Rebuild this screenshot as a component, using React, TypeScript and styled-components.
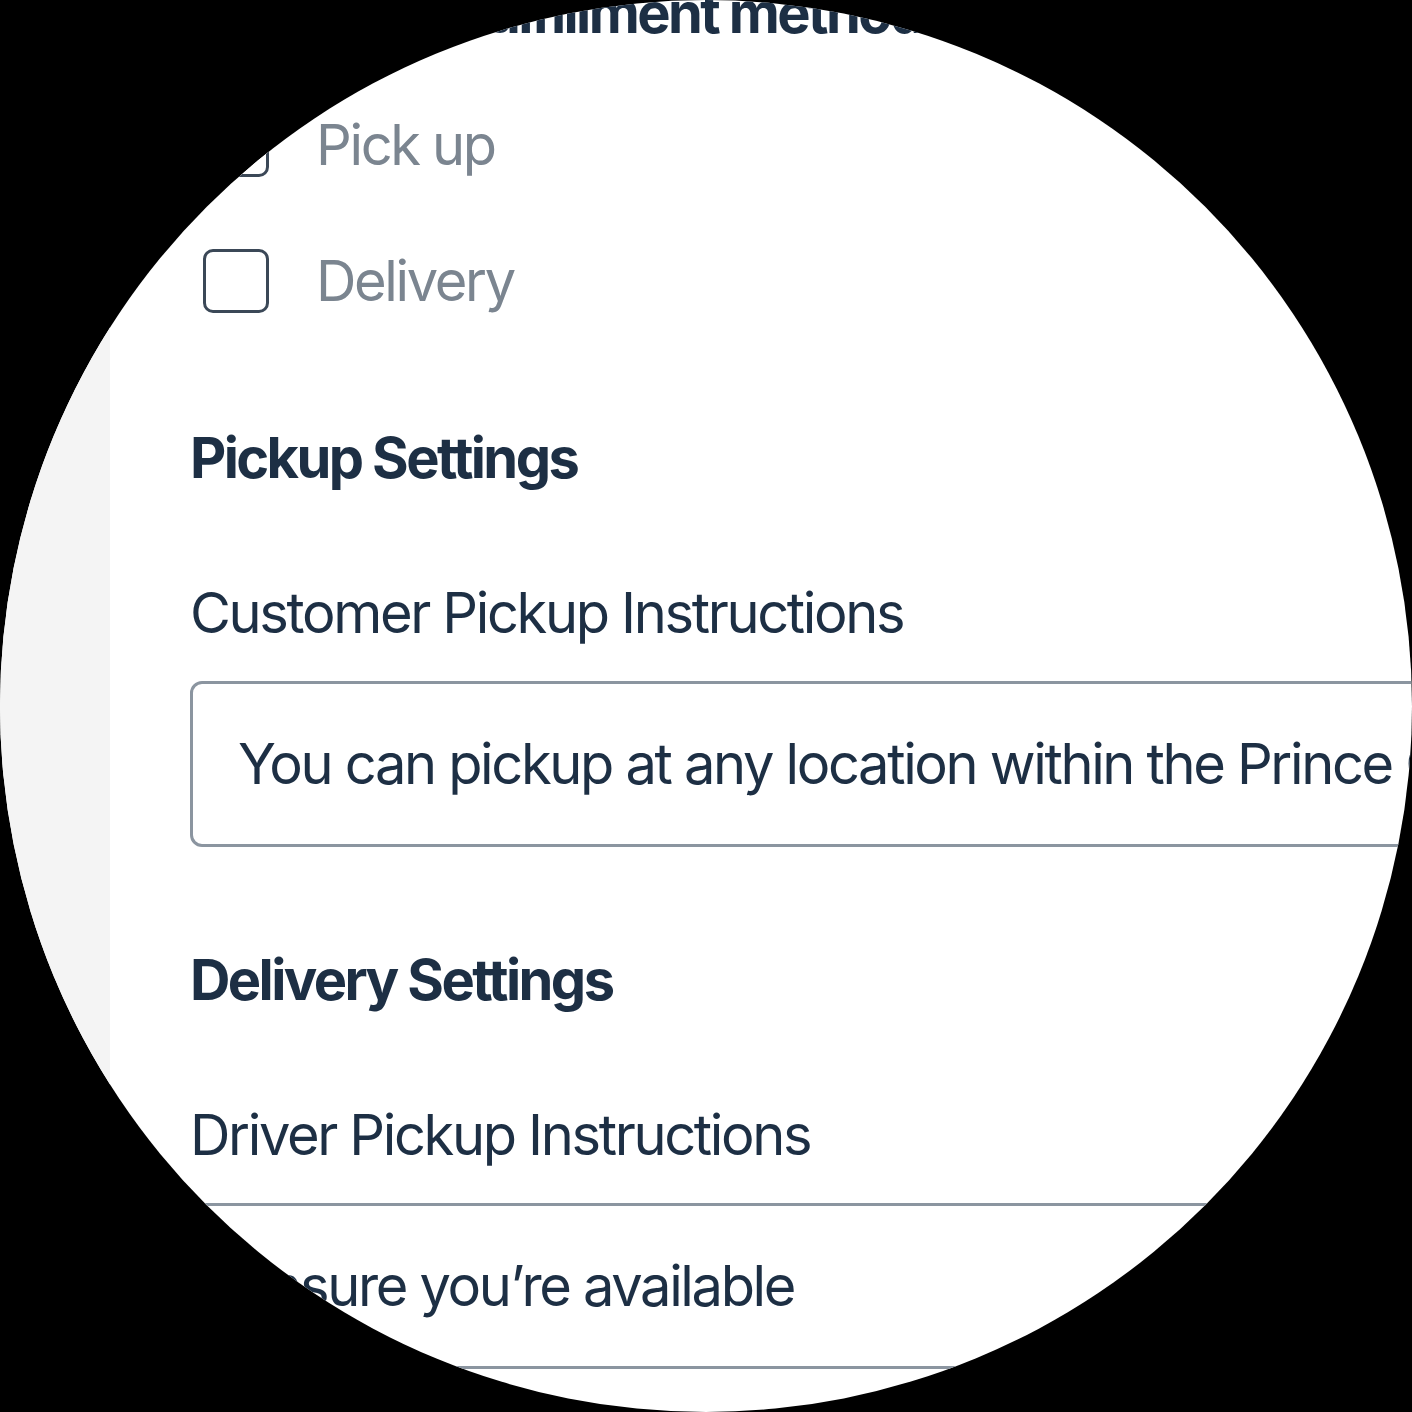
import React from "react";
import styled, { createGlobalStyle } from "styled-components";

const GlobalStyle = createGlobalStyle`
  html, body {
    margin: 0;
    padding: 0;
    background: #000;
  }
  * { box-sizing: border-box; }
`;

const Stage = styled.div`
  width: 1412px;
  height: 1412px;
  background: #000;
`;

const Lens = styled.div`
  width: 1412px;
  height: 1412px;
  border-radius: 50%;
  overflow: hidden;
  background: #ffffff;
  display: flex;
  font-family: Inter, "Noto Sans", sans-serif;
  letter-spacing: -2.35px;
  color: #1d2f44;
`;

const Sidebar = styled.aside`
  width: 110px;
  flex-shrink: 0;
  background: #f4f4f4;
`;

const Main = styled.main`
  flex: 1;
  display: flex;
  flex-direction: column;
  padding-left: 80px;
  margin-top: -21px;
  min-width: 0;
`;

const SectionTitle = styled.h2<{ $gap: number }>`
  margin: 0 0 ${(p) => p.$gap}px 0;
  font-size: 56px;
  line-height: 68px;
  font-weight: 700;
  letter-spacing: -2.6px;
  white-space: nowrap;
  color: #1d2f44;
`;

const OptionList = styled.div`
  display: flex;
  flex-direction: column;
  gap: 68px;
  margin-bottom: 109px;
`;

const OptionRow = styled.label`
  display: flex;
  align-items: center;
  height: 68px;
  padding-left: 13px;
  gap: 47px;
`;

const CheckBox = styled.span`
  width: 66px;
  height: 64px;
  border: 3px solid #3b4857;
  border-radius: 10px;
  flex-shrink: 0;
  background: #fff;
`;

const OptionText = styled.span`
  font-size: 56px;
  line-height: 68px;
  font-weight: 400;
  color: #7b8590;
`;

const FieldLabel = styled.div`
  font-size: 56px;
  line-height: 68px;
  font-weight: 400;
  margin-bottom: 34px;
  white-space: nowrap;
`;

const TextInput = styled.div<{ $after: number }>`
  width: calc(100% + 300px);
  height: 166px;
  border: 3px solid #8b95a0;
  border-radius: 12px;
  display: flex;
  align-items: center;
  padding-left: 45px;
  margin-bottom: ${(p) => p.$after}px;
  font-size: 56px;
  line-height: 68px;
  white-space: nowrap;
  overflow: hidden;
  color: #1d2f44;
`;

export default function App() {
  return (
    <>
      <GlobalStyle />
      <Stage>
        <Lens>
          <Sidebar />
          <Main>
            <SectionTitle $gap={64}>Supported fulfillment methods</SectionTitle>
            <OptionList>
              <OptionRow>
                <CheckBox />
                <OptionText>Pick up</OptionText>
              </OptionRow>
              <OptionRow>
                <CheckBox />
                <OptionText>Delivery</OptionText>
              </OptionRow>
            </OptionList>

            <SectionTitle $gap={87}>Pickup Settings</SectionTitle>
            <FieldLabel>Customer Pickup Instructions</FieldLabel>
            <TextInput $after={99}>
              You can pickup at any location within the Prince George area
            </TextInput>

            <SectionTitle $gap={87}>Delivery Settings</SectionTitle>
            <FieldLabel>Driver Pickup Instructions</FieldLabel>
            <TextInput $after={40}>Ensure you’re available</TextInput>
          </Main>
        </Lens>
      </Stage>
    </>
  );
}
